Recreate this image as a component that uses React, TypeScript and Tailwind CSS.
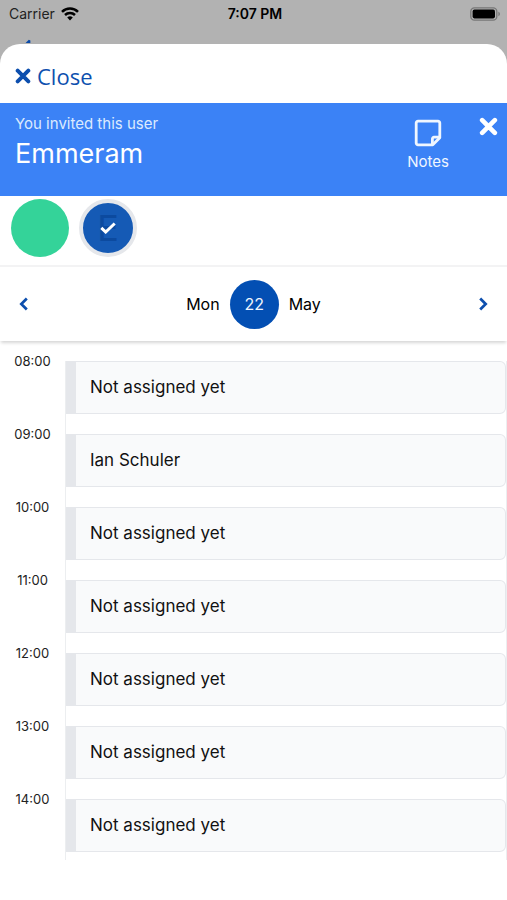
import React from "react";

const slots = [
  { time: "08:00", name: "Not assigned yet" },
  { time: "09:00", name: "Ian Schuler" },
  { time: "10:00", name: "Not assigned yet" },
  { time: "11:00", name: "Not assigned yet" },
  { time: "12:00", name: "Not assigned yet" },
  { time: "13:00", name: "Not assigned yet" },
  { time: "14:00", name: "Not assigned yet" },
];

function Cross({ className }: { className: string }) {
  return (
    <svg viewBox="0 0 18 18" className={className} fill="none" stroke="currentColor" strokeWidth="4.4" strokeLinecap="round" aria-hidden="true">
      <path d="M3 3l12 12M15 3L3 15" />
    </svg>
  );
}

function Chevron({ className }: { className: string }) {
  return (
    <svg viewBox="0 0 10 14" className={className} fill="none" stroke="currentColor" strokeWidth="2.7" aria-hidden="true">
      <path d="M7.800 1.500L2.300 7l5.500 5.500" />
    </svg>
  );
}

function StatusBar() {
  return (
    <div className="grid h-7 grid-cols-3 items-center pr-1.5 pl-[9px] text-sm text-black">
      <div className="flex items-center gap-1.5 text-[#222]">
        <span>Carrier</span>
        <svg viewBox="0 0 18 14" className="h-3.5 w-[18px]" fill="none" stroke="#000" strokeWidth="2.5" aria-hidden="true">
          <path d="M1 4.900a11.400 11.400 0 0 1 16 0M4 8a7.200 7.200 0 0 1 10 0" />
          <path d="M9 13.400L6.200 10.600a4 4 0 0 1 5.600 0z" fill="#000" stroke="none" />
        </svg>
      </div>
      <span className="text-center font-semibold">7:07 PM</span>
      <svg viewBox="0 0 31 14" className="h-3.5 w-[31px] justify-self-end" aria-hidden="true">
        <rect x="0.800" y="0.800" width="26" height="12.400" rx="3.600" fill="none" stroke="#777" strokeWidth="1.300" />
        <rect x="2.600" y="2.600" width="22.400" height="8.800" rx="1.800" fill="#000" />
        <path d="M28.400 4.800c2 .7 2 3.700 0 4.400z" fill="#777" />
      </svg>
    </div>
  );
}

export default function App() {
  return (
    <div className="min-h-screen bg-[#b2b2b2] font-['Inter',sans-serif]">
      <StatusBar />
      <div className="flex h-4 items-end pl-6">
        <svg viewBox="0 0 8 5" className="mb-px h-1 w-2 text-[#0b4aa8]" aria-hidden="true">
          <path d="M1 5L5 1l2 1v3z" fill="currentColor" />
        </svg>
      </div>
      <main className="min-h-[calc(100vh-44px)] overflow-hidden rounded-t-[20px] bg-white">
        <div className="flex h-[59px] items-center px-[15px] pt-1">
          <button className="flex items-center gap-1.5 font-['Open_Sans',sans-serif] text-[22px] leading-8 text-[#0d4fae]">
            <Cross className="size-4" />
            Close
          </button>
        </div>

        <header className="flex h-[93px] items-start bg-[#3b82f6] pr-[9px] pl-[15px] text-white">
          <div className="flex-1 pt-3">
            <p className="text-[15px] leading-[18px] text-[#dbeafe]">You invited this user</p>
            <h1 className="text-[27px] leading-[42px]">Emmeram</h1>
          </div>
          <button className="mt-4 mr-[30px] flex flex-col items-center gap-1.5 text-[15px] leading-[18px] text-[#eff6ff]">
            <svg viewBox="0 0 28 28" className="size-7" fill="none" stroke="currentColor" strokeWidth="2.800" strokeLinejoin="round" aria-hidden="true">
              <path d="M4 2.200h20a1.800 1.800 0 0 1 1.800 1.800v14.800l-7 7H4A1.800 1.800 0 0 1 2.200 24V4A1.800 1.800 0 0 1 4 2.200z" />
              <path d="M25.500 18.200h-5.500a1.600 1.600 0 0 0-1.600 1.600v5.600" />
            </svg>
            Notes
          </button>
          <button aria-label="Dismiss" className="mt-3 py-0.5">
            <Cross className="size-[19px]" />
          </button>
        </header>

        <div className="flex h-[71px] items-center gap-2.5 border-b-2 border-[#f3f3f4] px-[11px] pb-1.5">
          <button aria-label="First participant" className="size-[58px] rounded-full bg-[#34d399]" />
          <button aria-label="Emmeram, selected" className="grid size-[58px] place-items-center rounded-full border-4 border-[#e5e7eb] bg-[#155ab5] text-[#0c4a9f]">
            <span className="col-start-1 row-start-1 text-4xl leading-9">E</span>
            <svg viewBox="0 0 16 12" className="col-start-1 row-start-1 h-3 w-4" fill="none" stroke="#fff" strokeWidth="3" aria-hidden="true">
              <path d="M1.300 5.800l4.400 4.200 9-8.500" />
            </svg>
          </button>
        </div>

        <nav className="flex h-[74px] items-center justify-between px-[19px] text-black shadow-[0_3px_3px_-1px_rgba(0,0,0,0.16)]">
          <button aria-label="Previous day" className="text-[#0d4fae]">
            <Chevron className="h-3.5 w-2.5" />
          </button>
          <div className="flex items-center gap-2.5 text-base">
            <span>Mon</span>
            <span className="flex size-[49px] items-center justify-center rounded-full bg-[#034fb3] text-[#eff6ff]">22</span>
            <span>May</span>
          </div>
          <button aria-label="Next day" className="text-[#0d4fae]">
            <Chevron className="h-3.5 w-2.5 rotate-180" />
          </button>
        </nav>

        <ol className="pt-5">
          {slots.map((slot) => (
            <li key={slot.time} className="flex h-[73px] last:h-[61px]">
              <time className="-mt-2 w-[65px] shrink-0 text-center text-[13px] leading-4 text-[#222]">{slot.time}</time>
              <div className="min-w-0 flex-1 border-x border-[#eceef0]">
                <button className="flex h-[53px] w-full items-center rounded-r-md border border-l-[10px] border-[#e5e7eb] bg-[#f9fafb] pl-3.5 text-left text-[17px] text-[#111]">
                  {slot.name}
                </button>
              </div>
            </li>
          ))}
        </ol>
      </main>
    </div>
  );
}
